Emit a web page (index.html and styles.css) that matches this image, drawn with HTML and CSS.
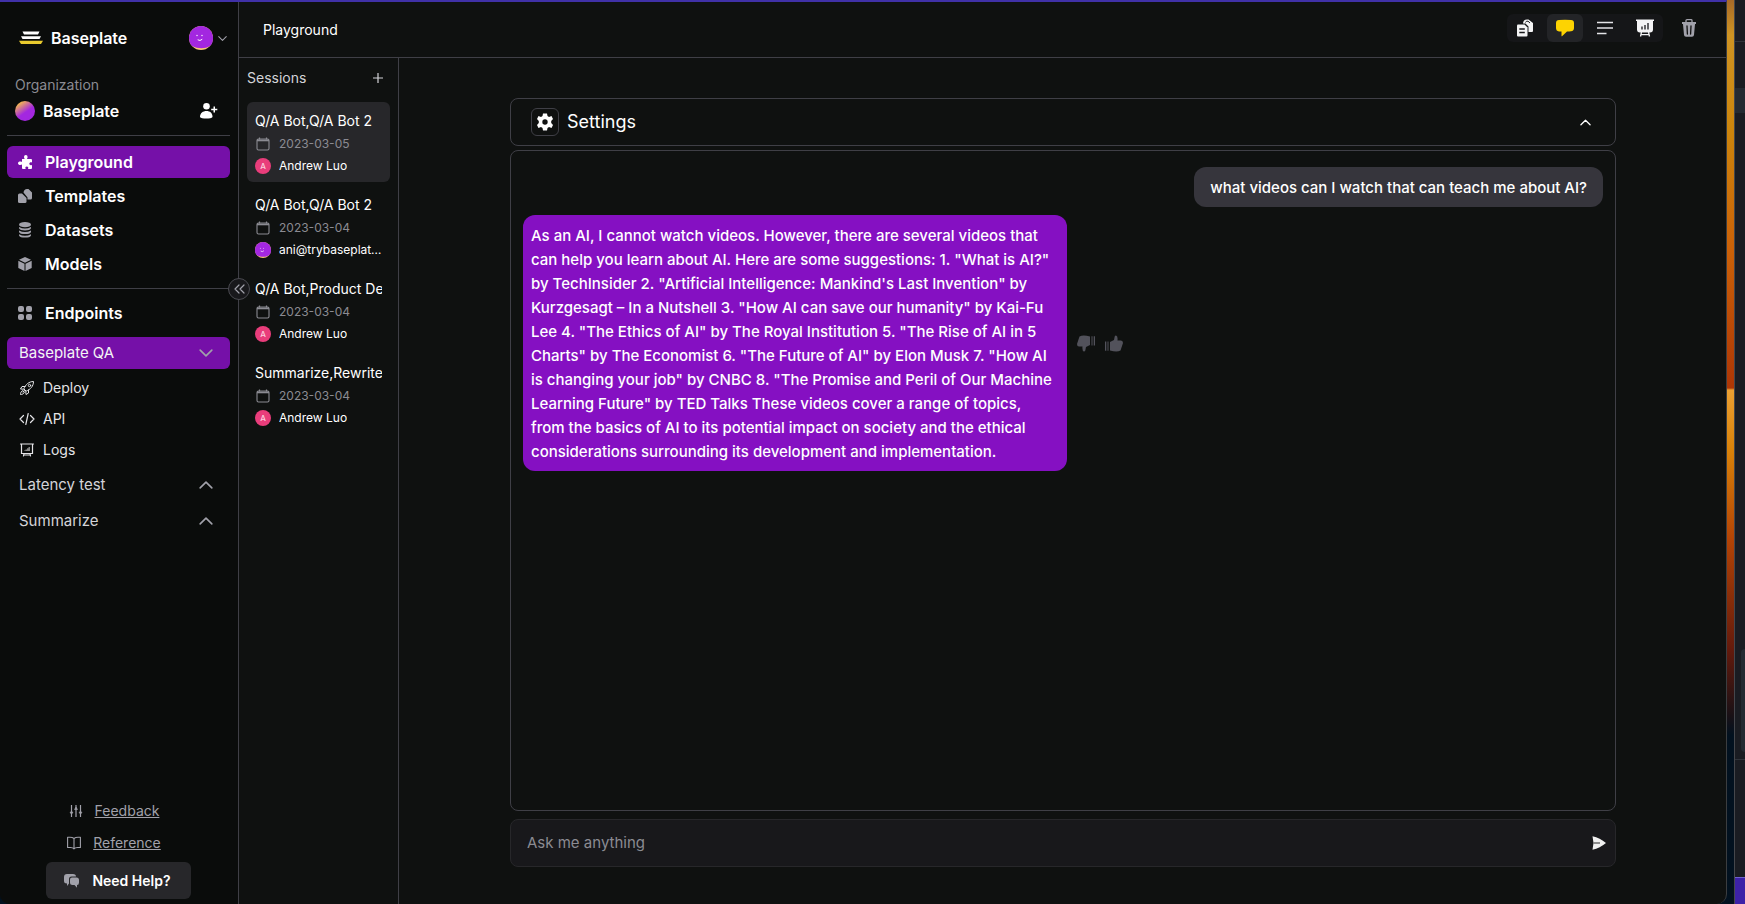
FILE: index.html
```html
<!DOCTYPE html>
<html lang="en">
<head>
  <meta charset="UTF-8">
  <meta name="viewport" content="width=device-width, initial-scale=1.0">
  <title>Baseplate - Playground</title>
  <link rel="stylesheet" href="styles.css">
</head>
<body>
  <!-- shared icons -->
  <svg class="sprite" aria-hidden="true">
    <symbol id="i-down" viewBox="0 0 12 12"><path d="M1 3.5l5 5 5-5" fill="none" stroke="currentColor" stroke-width="1.4" stroke-linecap="round" stroke-linejoin="round"/></symbol>
    <symbol id="i-up" viewBox="0 0 12 12"><path d="M1 8.5l5-5 5 5" fill="none" stroke="currentColor" stroke-width="1.4" stroke-linecap="round" stroke-linejoin="round"/></symbol>
    <symbol id="i-calendar" viewBox="0 0 14 14"><path d="M3.5 0.5v2M10.5 0.5v2" stroke="currentColor" stroke-width="1.2"/><rect x="1" y="2" width="12" height="11" rx="1.5" fill="none" stroke="currentColor" stroke-width="1.1"/><path d="M1 2.5h12v1.8H1z" fill="currentColor"/></symbol>
    <symbol id="i-face" viewBox="0 0 24 24"><circle cx="12" cy="12" r="12" fill="#f7c873"/><path d="M0 12a12 12 0 0 1 24 0c0 4-1 6-3 8-5 3-12 3-18 0-2-2-3-5-3-8z" fill="#a327e0"/><circle cx="8" cy="9.500" r="0.700" fill="#fff"/><circle cx="13" cy="9.500" r="0.700" fill="#fff"/><path d="M9 14q2 1.500 4-.5" fill="none" stroke="#fff" stroke-width="1" stroke-linecap="round"/></symbol>
  </svg>

  <div class="desktop">
    <div class="app">
      <aside class="sidebar">
        <div class="brand">
          <svg class="brand-logo" width="24" height="14" viewBox="0 0 24 14"><path d="M3.500 0.500h17l-1.500 3h-14z" fill="#fff"/><path d="M2 5.200h20l-1.500 2.800h-17z" fill="#fff"/><path d="M0 9.800h24l-2 3.200H2z" fill="#e9cb2e"/></svg>
          <span class="brand-name">Baseplate</span>
          <button class="account" aria-label="Account">
            <svg width="24" height="24"><use href="#i-face"/></svg>
            <svg class="account-arrow" width="9" height="9"><use href="#i-down"/></svg>
          </button>
        </div>

        <p class="org-label">Organization</p>
        <div class="org">
          <span class="org-dot"></span>
          <span class="org-name">Baseplate</span>
          <button class="invite" aria-label="Invite member">
            <svg width="18" height="16" viewBox="0 0 18 16" fill="currentColor"><circle cx="6.500" cy="3.300" r="3.300"/><path d="M0 14c0-4 3-6 6.500-6s6 2 6 6c-1 2-11.500 2-12.500 0z"/><path d="M13.500 3.500H15v2.300h2.300v1.500H15v2.300h-1.500V7.300h-2.300V5.800h2.300z"/></svg>
          </button>
        </div>

        <nav class="nav">
          <a class="nav-link active" href="#">
            <svg width="14" height="14" viewBox="0 0 14 14" fill="currentColor"><path d="M4 5V4h2.700C6.300 3.300 6 2.700 6 2q0-2 1.800-2t1.800 2c0 .7-.2 1.300-.7 2H13q1 0 1 1v2.500c-1.500-.6-2.700.1-2.700 1.300S12.500 10.700 14 10v3q0 1-1 1h-3c.7-1.300.2-2.500-1.200-2.500S7 12.700 7.700 14H5q-1 0-1-1V9.500C2.400 10.400 0 10 0 8.200s2.400-2 4-1.200z"/></svg>
            Playground
          </a>
          <a class="nav-link" href="#">
            <svg width="14" height="14" viewBox="0 0 14 14" fill="currentColor"><path d="M0 6Q0 4.500 1.500 4.500H4L8.500 9v3.500Q8.500 14 7 14H1.500Q0 14 0 12.500z"/><path d="M5.500 3.500Q6 0 9 0h1.500L14 3.500V9q0 1.500-1.500 1.500h-3V8.500z"/></svg>
            Templates
          </a>
          <a class="nav-link" href="#">
            <svg width="14" height="16" viewBox="0 0 14 16" fill="currentColor"><ellipse cx="7" cy="2.700" rx="6" ry="2.600"/><path d="M1 5q6 3 12 0v1.300q-1 2.200-6 2.200T1 6.300z"/><path d="M1 8.600q6 3 12 0v1.300q-1 2.200-6 2.200T1 9.900z"/><path d="M1 12.200q6 3 12 0v1.200q-1 2.200-6 2.200t-6-2.200z"/></svg>
            Datasets
          </a>
          <a class="nav-link" href="#">
            <svg width="14" height="14" viewBox="0 0 14 14" fill="currentColor"><path d="M7 0l6 2.800L7 5.800 1 2.800z"/><path d="M.3 3.800l6.200 3V14L.3 11z"/><path d="M13.700 3.800l-6.200 3V14l6.200-3z"/></svg>
            Models
          </a>
        </nav>

        <div class="endpoints">
          <a class="nav-link" href="#">
            <svg width="14" height="14" viewBox="0 0 14 14" fill="currentColor"><rect width="6" height="6" rx="2"/><rect x="8" width="6" height="6" rx="2"/><rect y="8" width="6" height="6" rx="2"/><rect x="8" y="8" width="6" height="6" rx="2"/></svg>
            Endpoints
          </a>
          <button class="group active">Baseplate QA <svg width="14" height="14"><use href="#i-down"/></svg></button>
          <div class="sub">
            <a class="sub-link" href="#">
              <svg width="16" height="16" viewBox="0 0 16 16" fill="none" stroke="currentColor" stroke-linejoin="round" stroke-linecap="round"><path d="M5 8.500C6.500 4.500 10 1.500 14.500 1.500 14.500 6 11.500 9.500 7.500 11z"/><circle cx="10.500" cy="5.500" r="1.200"/><path d="M6 6.500L3 6.500 1.500 9l3 .2M9.500 10v3L7 14.500l-.2-3"/><path d="M4 10.500C2 11 1.500 13 1.500 14.500 3 14.500 5 14 5.500 12M5.500 10.500l-1.500 1.500"/></svg>
              Deploy
            </a>
            <a class="sub-link" href="#">
              <svg width="16" height="16" viewBox="0 0 16 16" fill="none" stroke="currentColor" stroke-width="1.200" stroke-linejoin="round" stroke-linecap="round"><path d="M4.500 4.500L1 8l3.500 3.500M11.500 4.500L15 8l-3.500 3.500M9.200 2.500L6.800 13.500"/></svg>
              API
            </a>
            <a class="sub-link" href="#">
              <svg width="16" height="16" viewBox="0 0 16 16" fill="none" stroke="currentColor" stroke-width="1.200" stroke-linecap="round"><path d="M1.500 2h13M2.500 2v9.500h11V2M5 11.500L4.500 14M11 11.500l.5 2.500M5 13h6"/><path d="M5 8.500h1.500v-1H8v-1.300h1.500V5H11v4H5z" fill="#888" stroke="none"/></svg>
              Logs
            </a>
          </div>
          <button class="group">Latency test <svg width="14" height="14"><use href="#i-up"/></svg></button>
          <button class="group">Summarize <svg width="14" height="14"><use href="#i-up"/></svg></button>
        </div>

        <div class="sidebar-footer">
          <a class="footer-link" href="#">
            <svg width="14" height="14" viewBox="0 0 14 14" fill="none" stroke="currentColor" stroke-width="1.200"><path d="M2.500 1v12M7 1v12M11.500 1v12"/><path d="M1 8h3L2.500 10.500zM5.500 5.500h3L7 3zM10 8h3l-1.500 2.500z" fill="currentColor" stroke-width="0.600"/></svg>
            <span>Feedback</span>
          </a>
          <a class="footer-link" href="#">
            <svg width="14" height="14" viewBox="0 0 14 14" fill="none" stroke="currentColor" stroke-width="1.100" stroke-linejoin="round"><path d="M7 2.500Q5.500 1.300 3 1.300H.6v10.200H3.500Q6 11.500 7 12.800 8 11.500 10.500 11.500h2.900V1.300H11Q8.500 1.300 7 2.500zM7 2.500v10"/></svg>
            <span>Reference</span>
          </a>
          <button class="help">
            <svg width="15" height="14" viewBox="0 0 15 14" fill="currentColor"><path d="M3 0h6q3 0 3 2.500H7.500Q5 2.500 5 5v4.500L3 12V9.500Q0 9.500 0 7V3Q0 0 3 0z"/><path d="M8 3.500h4.500Q15 3.500 15 6v2.500q0 2.500-2 2.500v2.700L10.500 11H8.500Q6 11 6 8.500v-3q0-2 2-2z"/></svg>
            Need Help?
          </button>
        </div>

        <button class="collapse" aria-label="Collapse sidebar">
          <svg width="11" height="10" viewBox="0 0 11 10" fill="none" stroke="currentColor" stroke-width="1.200" stroke-linecap="round" stroke-linejoin="round"><path d="M5 1L1 5l4 4M10 1L6 5l4 4"/></svg>
        </button>
      </aside>

      <div class="page">
        <header class="topbar">
          <h1>Playground</h1>
          <div class="modes">
            <button class="mode" aria-label="Templates">
              <svg width="18" height="18" viewBox="0 0 18 18"><path d="M7 4.500Q7.300.5 11 .5h1.500L17 4v8q0 1-1 1h-3.500V7.500L9.500 4.500z" fill="#f4f4f5"/><path d="M9.500 3.500Q10 1.800 12 2.200L14 4" fill="none" stroke="#18181b" stroke-width="1"/><path d="M1 6.500Q1 5.500 2 5.500h6.500L11.500 8.500v8q0 1-1 1H2q-1 0-1-1z" fill="#f4f4f5"/><path d="M3.300 10h5.500M3.300 13.500h5.500" stroke="#18181b" stroke-width="1.300"/></svg>
            </button>
            <button class="mode active" aria-label="Chat">
              <svg width="20" height="18" viewBox="0 0 20 18"><path d="M4 1Q10 .3 16 1q3 .2 3 3v5q0 3-3 3.300-1.500.2-4 .2L7 17.300q-.5.2-.5-.5v-4.300H4Q1 12 1 9V4q0-2.800 3-3z" fill="#fdd302"/></svg>
            </button>
            <button class="mode" aria-label="Text">
              <svg width="18" height="14" viewBox="0 0 18 14" stroke="#e4e4e7" stroke-width="1.500"><path d="M1 1.500h16M1 7h16M1 12.500h9.500"/></svg>
            </button>
            <button class="mode" aria-label="Logs">
              <svg width="18" height="18" viewBox="0 0 18 18"><path d="M0 .5h18V2h-1v8.500q0 3-3 3H4q-3 0-3-3V2H0z" fill="#f4f4f5"/><path d="M5.500 13l-1 4.500M12.500 13l1 4.500M5 15.700h8" stroke="#f4f4f5" stroke-width="1.300"/><path d="M6 7.500v3M9 6v4.500M12 4v6.500" stroke="#18181b" stroke-width="1.300"/></svg>
            </button>
          </div>
          <button class="trash" aria-label="Delete">
            <svg width="16" height="18" viewBox="0 0 16 18"><path d="M5 3V1.500Q5 .7 6 .7h4q1 0 1 .8V3" fill="none" stroke="#a1a1aa" stroke-width="1.300"/><path d="M1 3h14v2H1z" fill="#a1a1aa"/><path d="M2 5h12l-1 11q-.2 1.700-2 1.700H5q-1.800 0-2-1.700z" fill="#a1a1aa"/><path d="M6 7l.4 8M10 7l-.4 8" stroke="#111" stroke-width="1.300" stroke-linecap="round"/></svg>
          </button>
        </header>

        <div class="content">
          <section class="sessions">
            <div class="sessions-head">
              <h2>Sessions</h2>
              <button class="add" aria-label="New session">
                <svg width="10" height="10" viewBox="0 0 10 10" stroke="currentColor" stroke-width="1.200"><path d="M5 0v10M0 5h10"/></svg>
              </button>
            </div>
            <a class="session active" href="#">
              <span class="session-title">Q/A Bot,Q/A Bot 2</span>
              <span class="session-date"><svg width="14" height="14"><use href="#i-calendar"/></svg>2023-03-05</span>
              <span class="session-user"><b class="initial">A</b><span>Andrew Luo</span></span>
            </a>
            <a class="session" href="#">
              <span class="session-title">Q/A Bot,Q/A Bot 2</span>
              <span class="session-date"><svg width="14" height="14"><use href="#i-calendar"/></svg>2023-03-04</span>
              <span class="session-user"><svg width="16" height="16"><use href="#i-face"/></svg><span>ani@trybaseplate.com</span></span>
            </a>
            <a class="session" href="#">
              <span class="session-title">Q/A Bot,Product Description</span>
              <span class="session-date"><svg width="14" height="14"><use href="#i-calendar"/></svg>2023-03-04</span>
              <span class="session-user"><b class="initial">A</b><span>Andrew Luo</span></span>
            </a>
            <a class="session" href="#">
              <span class="session-title">Summarize,Rewrite</span>
              <span class="session-date"><svg width="14" height="14"><use href="#i-calendar"/></svg>2023-03-04</span>
              <span class="session-user"><b class="initial">A</b><span>Andrew Luo</span></span>
            </a>
          </section>

          <main class="chat">
            <button class="settings">
              <span class="gear">
                <svg width="16" height="18" viewBox="0 0 16 18"><path d="M6 .5h4l.5 2.600 1.500.9 2.500-1 1.500 3-1.800 2v2l1.800 2-1.500 3-2.500-1-1.500.9-.5 2.600H6l-.5-2.600L4 14l-2.500 1L0 12l1.800-2V8L0 6l1.500-3L4 4l1.500-.9z" fill="#fff"/><circle cx="8" cy="9" r="2.700" fill="#101211"/></svg>
              </span>
              <span class="settings-title">Settings</span>
              <svg class="settings-arrow" width="11" height="11"><use href="#i-up"/></svg>
            </button>

            <div class="messages">
              <div class="message-row mine">
                <p class="bubble">what videos can I watch that can teach me about AI?</p>
              </div>
              <div class="message-row">
                <p class="bubble bot">As an AI, I cannot watch videos. However, there are several videos that can help you learn about AI. Here are some suggestions: 1. "What is AI?" by TechInsider 2. "Artificial Intelligence: Mankind's Last Invention" by Kurzgesagt – In a Nutshell 3. "How AI can save our humanity" by Kai-Fu Lee 4. "The Ethics of AI" by The Royal Institution 5. "The Rise of AI in 5 Charts" by The Economist 6. "The Future of AI" by Elon Musk 7. "How AI is changing your job" by CNBC 8. "The Promise and Peril of Our Machine Learning Future" by TED Talks These videos cover a range of topics, from the basics of AI to its potential impact on society and the ethical considerations surrounding its development and implementation.</p>
                <button class="vote" aria-label="Bad answer">
                  <svg width="18" height="17" viewBox="0 0 18 17" fill="currentColor"><path d="M2.500 1.500Q6-.3 13 1.500V10l-4 2-.7 3.500q-.3 1-1.300 1-2-.5-1.500-5H2Q0 11.500 0 9z"/><path d="M14.500 1.300h1V10.500h-1zM16.700 1.300H18V10.500h-1.300z"/></svg>
                </button>
                <button class="vote" aria-label="Good answer">
                  <svg width="18" height="17" viewBox="0 0 18 17" fill="currentColor"><path d="M15.500 15.500Q12 17.300 5 15.500V7l4-2 .7-3.500q.3-1 1.300-1 2 .5 1.500 5H16q2 0 2 2.500z"/><path d="M0 6.500h1.300v9.200H0zM2.500 6.500h1v9.200h-1z"/></svg>
                </button>
              </div>
            </div>

            <form class="ask">
              <input type="text" aria-label="Message" placeholder="Ask me anything">
              <button type="button" class="send" aria-label="Send">
                <svg width="14" height="14" viewBox="0 0 14 14"><path d="M.5.300Q8 2 14 7 8 12 .5 13.700L1.500 7z" fill="#f0f0f0"/><path d="M1.500 7h6.500" stroke="#555" stroke-width="1.300"/></svg>
              </button>
            </form>
          </main>
        </div>
      </div>
    </div>

    <!-- strip of wallpaper and the window behind -->
    <div class="wallpaper"></div>
    <div class="back-window">
      <div class="back-top"></div>
      <div class="back-tab"></div>
      <div class="back-body"><div class="back-card"></div></div>
      <div class="back-bottom"></div>
      <div class="back-status"></div>
    </div>
  </div>
</body>
</html>
```
FILE: styles.css
```css
* {
  box-sizing: border-box;
}
body {
  margin: 0;
  background: #02111f;
  color: #fff;
  font-family: Inter, "Liberation Sans", sans-serif;
  font-size: 14px;
  line-height: 20px;
}
h1, h2, p {
  margin: 0;
}
a {
  color: inherit;
  text-decoration: none;
}
button {
  font: inherit;
  color: inherit;
  background: none;
  border: none;
  padding: 0;
  cursor: pointer;
}
svg {
  display: block;
  flex-shrink: 0;
}
.sprite {
  position: absolute;
  width: 0;
  height: 0;
}
.desktop {
  display: flex;
  height: 100vh;
  overflow: hidden;
}
.app {
  flex: 1;
  min-width: 0;
  display: flex;
  background: #0f1110;
  border-top: 2px solid #4031a8;
  border-right: 1px solid #3b3d40;
  border-radius: 0 0 10px 10px;
}

/* sidebar */
.sidebar {
  position: relative;
  width: 239px;
  flex-shrink: 0;
  display: flex;
  flex-direction: column;
  padding: 16px 8px 5px 7px;
  background: #0a0c0b;
  border-right: 1px solid #3f3f46;
  border-bottom-left-radius: 10px;
}
.brand {
  display: flex;
  align-items: center;
  height: 40px;
  padding-left: 12px;
}
.brand-name, .org-name {
  font-size: 16px;
  font-weight: 600;
}
.brand-name {
  margin-left: 8px;
}
.account {
  display: flex;
  align-items: center;
  gap: 5px;
  margin-left: auto;
  margin-right: 3px;
  color: #a1a1aa;
}
.org-label {
  margin-top: 17px;
  padding-left: 8px;
  color: #8b8b92;
}
.org {
  display: flex;
  align-items: center;
  height: 24px;
  margin-top: 4px;
  padding: 0 12px 0 8px;
}
.org-dot {
  width: 20px;
  height: 20px;
  margin-right: 8px;
  border-radius: 50%;
  background: linear-gradient(145deg, #f3b552 15%, #a327e0 55%);
}
.invite {
  margin-left: auto;
}
.nav {
  display: flex;
  flex-direction: column;
  gap: 2px;
  margin-top: 12px;
  padding: 10px 0 8px;
  border-top: 1px solid #3f3f46;
  border-bottom: 1px solid #3f3f46;
}
.nav-link {
  display: flex;
  align-items: center;
  gap: 13px;
  height: 32px;
  padding-left: 11px;
  border-radius: 6px;
  font-size: 16px;
  font-weight: 600;
}
.nav-link svg {
  color: #a1a1aa;
}
.nav-link.active, .group.active {
  background: #7510a8;
}
.nav-link.active svg {
  color: #fff;
}
.endpoints {
  display: flex;
  flex-direction: column;
  gap: 4px;
  padding-top: 8px;
}
.group {
  display: flex;
  align-items: center;
  justify-content: space-between;
  height: 32px;
  padding: 0 17px 0 12px;
  border-radius: 6px;
  color: #d4d4d8;
  font-size: 15px;
}
.group svg {
  color: #a1a1aa;
}
.group.active {
  margin-top: 4px;
  color: #f4f4f5;
}
.sub {
  margin-top: -1px;
}
.sub-link {
  display: flex;
  align-items: center;
  gap: 8px;
  height: 31px;
  padding-left: 12px;
  color: #e4e4e7;
}
.sidebar-footer {
  display: flex;
  flex-direction: column;
  align-items: center;
  margin-top: auto;
}
.footer-link {
  display: flex;
  align-items: center;
  gap: 12px;
  height: 32px;
  padding-right: 9px;
  color: #a1a1aa;
}
.footer-link span {
  text-decoration: underline;
}
.help {
  display: flex;
  align-items: center;
  gap: 13px;
  height: 37px;
  margin-top: 3px;
  padding: 0 20px 0 18px;
  border-radius: 6px;
  background: #27272a;
  font-weight: 600;
}
.help svg {
  color: #a1a1aa;
}
.collapse {
  position: absolute;
  top: 276px;
  right: -12px;
  z-index: 1;
  display: flex;
  align-items: center;
  justify-content: center;
  width: 22px;
  height: 22px;
  border: 1px solid #4a4a50;
  border-radius: 50%;
  background: #18181b;
  color: #a1a1aa;
}

/* top bar */
.page {
  flex: 1;
  min-width: 0;
  display: flex;
  flex-direction: column;
}
.topbar {
  display: flex;
  align-items: center;
  height: 56px;
  padding: 0 29px 0 24px;
  border-bottom: 1px solid #3f3f46;
}
.topbar h1 {
  font-size: 14px;
  font-weight: 400;
}
.modes {
  display: flex;
  gap: 4px;
  margin-bottom: 4px;
  margin-left: auto;
  border-radius: 6px;
  background: #151618;
}
.mode {
  display: flex;
  align-items: center;
  justify-content: center;
  width: 36px;
  height: 28px;
  border-radius: 6px;
}
.mode.active {
  background: #232427;
}
.trash {
  margin-bottom: 4px;
  margin-left: 18px;
}

/* sessions */
.content {
  flex: 1;
  min-height: 0;
  display: flex;
}
.sessions {
  width: 160px;
  flex-shrink: 0;
  display: flex;
  flex-direction: column;
  gap: 4px;
  padding: 10px 8px;
  border-right: 1px solid #3f3f46;
}
.sessions-head {
  display: flex;
  align-items: center;
  justify-content: space-between;
  height: 20px;
  margin-bottom: 10px;
  padding-right: 7px;
  color: #d4d4d8;
}
.sessions-head h2 {
  font-size: 14px;
  font-weight: 400;
}
.session {
  display: flex;
  flex-direction: column;
  gap: 4px;
  height: 80px;
  padding: 9px 8px 7px;
  border-radius: 6px;
  font-size: 12px;
}
.session.active {
  background: #27272a;
}
.session-title {
  overflow: hidden;
  white-space: nowrap;
  font-size: 14px;
}
.session-date, .session-user {
  display: flex;
  align-items: center;
  gap: 8px;
  height: 18px;
  line-height: 18px;
}
.session-date {
  padding-left: 1px;
  gap: 9px;
  color: #8b8b92;
}
.session-user span {
  overflow: hidden;
  white-space: nowrap;
  text-overflow: ellipsis;
}
.initial {
  width: 16px;
  height: 16px;
  flex-shrink: 0;
  border-radius: 50%;
  background: #e93d7b;
  color: #fbd0df;
  font-size: 8px;
  font-weight: 500;
  line-height: 16px;
  text-align: center;
}

/* chat */
.chat {
  flex: 1;
  min-width: 0;
  display: flex;
  flex-direction: column;
  padding: 40px 110px 37px 111px;
}
.settings, .messages, .ask {
  border: 1px solid #3f3f46;
  border-radius: 8px;
}
.settings {
  display: flex;
  align-items: center;
  height: 48px;
  padding: 0 24px 0 20px;
}
.gear {
  display: flex;
  align-items: center;
  justify-content: center;
  width: 28px;
  height: 28px;
  border: 1px solid #3f3f46;
  border-radius: 6px;
}
.settings-title {
  margin-left: 8px;
  font-size: 18px;
  line-height: 24px;
}
.settings-arrow {
  margin-left: auto;
}
.messages {
  flex: 1;
  min-height: 0;
  display: flex;
  flex-direction: column;
  gap: 8px;
  margin: 4px 0 8px;
  padding: 16px 12px;
  overflow: auto;
}
.message-row {
  display: flex;
  align-items: center;
  gap: 10px;
}
.message-row.mine {
  justify-content: flex-end;
}
.bubble {
  padding: 9px 16px 7px;
  border-radius: 12px;
  background: #36353c;
  font-size: 15px;
  font-weight: 500;
  line-height: 24px;
}
.bubble.bot {
  max-width: 544px;
  padding: 9px 12px 7px 8px;
  background: #8510c2;
}
.vote {
  color: #52525b;
}
.ask {
  display: flex;
  align-items: center;
  height: 48px;
  padding: 0 9px 0 16px;
  border-color: #27272a;
  background: #18181b;
}
.ask input {
  flex: 1;
  min-width: 0;
  padding: 0;
  border: none;
  outline: none;
  background: none;
  color: #fff;
  font: inherit;
  font-size: 15px;
}
.ask input::placeholder {
  color: #8b8b92;
}

/* background on the right */
.wallpaper {
  width: 7px;
  background: linear-gradient(#a86a28 0, #cf9423 35px, #cc850c 130px, #cb6108 250px, #ad3605 388px, #eba032 390px, #d98209 450px, #b34305 540px, #631a0c 650px, #1a1116 715px, #02111f 735px);
}
.back-window {
  width: 11px;
  display: flex;
  flex-direction: column;
  border-left: 1px solid #45474c;
  background: #1a1c22;
}
.back-top {
  height: 42px;
  border-bottom: 1px solid #30333a;
}
.back-tab {
  height: 25px;
  margin-top: 46px;
  background: #242a32;
}
.back-body {
  flex: 1;
  display: flex;
  flex-direction: column;
  justify-content: flex-end;
  padding: 0 0 7px 6px;
}
.back-card {
  height: 103px;
  border-radius: 4px 0 0 4px;
  background: #242a32;
}
.back-bottom {
  height: 118px;
  border-top: 1px solid #30333a;
}
.back-status {
  height: 27px;
  border-top: 1px solid #7061cc;
  background: #3d22a8;
}
```
